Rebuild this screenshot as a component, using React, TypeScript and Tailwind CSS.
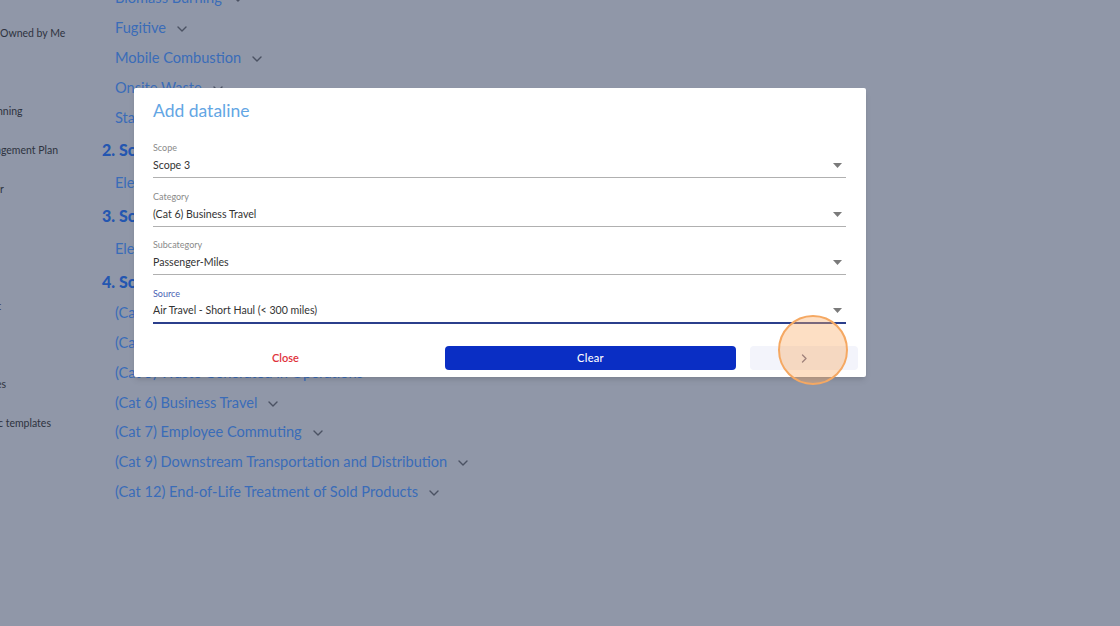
import React from "react";

const font = { fontFamily: "Lato, 'Open Sans', 'Liberation Sans', sans-serif" };

function Chevron() {
  return (
    <svg width="10" height="6" viewBox="0 0 10 6" className="ml-[11px] mt-[2px]" fill="none">
      <path d="M1 1l4 4 4-4" stroke="#4b5263" strokeWidth="1.4" strokeLinecap="round" strokeLinejoin="round" />
    </svg>
  );
}

function LinkRow({ text, h, chevron = true }: { text: string; h: string; chevron?: boolean }) {
  return (
    <div className={`flex items-center ${h} pl-[13px] text-[14.6px] text-[#3a6cb8] whitespace-nowrap`}>
      <span>{text}</span>
      {chevron && <Chevron />}
    </div>
  );
}

function Heading({ text }: { text: string }) {
  return (
    <div className="flex items-center h-[33px] text-[16px] font-black text-[#2456b0] whitespace-nowrap" style={{ fontFamily: "Lato, 'Noto Sans', sans-serif" }}>
      {text}
    </div>
  );
}

function Caret() {
  return (
    <svg width="9" height="5" viewBox="0 0 9 5">
      <path d="M0 0h9L4.5 5z" fill="#7a7a7a" />
    </svg>
  );
}

function Field({ label, value, active = false }: { label: string; value: string; active?: boolean }) {
  return (
    <div className="flex flex-col h-[48.5px] pt-[6px]">
      <div className={`text-[9px] leading-[12px] ${active ? "text-[#4a63b4]" : "text-[#8a8a8a]"}`}>{label}</div>
      <div
        className={`flex items-center justify-between h-[24px] ${
          active ? "border-b-2 border-[#2b3f8c]" : "border-b border-[#b0b0b0]"
        }`}
      >
        <span className="text-[10.6px] text-[#333] pt-[1px]">{value}</span>
        <span className="pr-[4px]">
          <Caret />
        </span>
      </div>
    </div>
  );
}

export default function App() {
  const sidebar: { text: string; ml: string; h: string }[] = [
    { text: "Shared with Me", ml: "ml-[-52px]", h: "h-[39px]" },
    { text: "Owned by Me", ml: "ml-0", h: "h-[39px]" },
    { text: "Reports", ml: "ml-[-40px]", h: "h-[39px]" },
    { text: "Planning", ml: "ml-[-17px]", h: "h-[39px]" },
    { text: "Management Plan", ml: "ml-[-25px]", h: "h-[39px]" },
    { text: "Calculator", ml: "ml-[-43px]", h: "h-[39px]" },
    { text: "Settings", ml: "ml-[-60px]", h: "h-[39px]" },
    { text: "Help", ml: "ml-[-60px]", h: "h-[39px]" },
    { text: "Import", ml: "ml-[-30px]", h: "h-[39px]" },
    { text: "Templates", ml: "ml-[-60px]", h: "h-[39px]" },
    { text: "Sources", ml: "ml-[-30px]", h: "h-[39px]" },
    { text: "Public templates", ml: "ml-[-25px]", h: "h-[39px]" },
  ];

  return (
    <div className="relative w-[1120px] h-[626px] overflow-hidden bg-[#9097a8]" style={font}>
      <div className="flex h-full">
        {/* sidebar */}
        <div className="w-[102px] shrink-0 overflow-hidden">
          <div className="flex flex-col mt-[-25px]">
            {sidebar.map((s, i) => (
              <div key={i} className={`flex items-center ${s.h} ${s.ml} text-[10.5px] text-[#2e3340] whitespace-nowrap`}>
                {s.text}
              </div>
            ))}
          </div>
        </div>
        {/* content */}
        <div className="flex flex-col mt-[-17px]">
          <LinkRow text="Biomass Burning" h="h-[30px]" />
          <LinkRow text="Fugitive" h="h-[30px]" />
          <LinkRow text="Mobile Combustion" h="h-[30px]" />
          <LinkRow text="Onsite Waste" h="h-[30px]" />
          <LinkRow text="Stationary Combustion" h="h-[30px]" />
          <Heading text="2. Scope 2 - Location Based" />
          <LinkRow text="Electricity" h="h-[33px]" />
          <Heading text="3. Scope 2 - Market Based" />
          <LinkRow text="Electricity" h="h-[33px]" />
          <Heading text="4. Scope 3" />
          <LinkRow text="(Cat 1) Purchased Goods and Services" h="h-[30px]" />
          <LinkRow text="(Cat 3) Fuel- and Energy-Related Activities" h="h-[30px]" />
          <LinkRow text="(Cat 5) Waste Generated in Operations" h="h-[29.7px]" />
          <LinkRow text="(Cat 6) Business Travel" h="h-[29.7px]" />
          <LinkRow text="(Cat 7) Employee Commuting" h="h-[29.7px]" />
          <LinkRow text="(Cat 9) Downstream Transportation and Distribution" h="h-[29.7px]" />
          <LinkRow text="(Cat 12) End-of-Life Treatment of Sold Products" h="h-[29.7px]" />
        </div>
      </div>

      {/* modal */}
      <div className="absolute left-[134px] top-[88px] w-[732px] h-[289px] bg-white rounded-[2px] shadow-md">
        <div className="flex flex-col h-full">
          <div className="px-[19px] pt-[12px] h-[48px] text-[17.5px] text-[#63a6e4] leading-[22px]">Add dataline</div>
          <div className="flex flex-col pl-[19px] pr-[20px]">
            <Field label="Scope" value="Scope 3" />
            <Field label="Category" value="(Cat 6) Business Travel" />
            <Field label="Subcategory" value="Passenger-Miles" />
            <Field label="Source" value="Air Travel - Short Haul (< 300 miles)" active />
          </div>
          <div className="flex items-center gap-[14px] pl-[6px] pt-[16px]">
            <button className="w-[291px] h-[24px] text-[11px] font-semibold text-[#e0313b]">Close</button>
            <button className="w-[291px] h-[24px] rounded-[4px] bg-[#0a2ec4] text-[11px] font-medium text-white tracking-[0.3px]">
              Clear
            </button>
            <button className="w-[108px] h-[24px] rounded-[4px] bg-[#f3f4fb] flex items-center justify-center">
              <svg width="7" height="9" viewBox="0 0 7 9" fill="none">
                <path d="M1.5 1l3.5 3.5L1.5 8" stroke="#6a6a8a" strokeWidth="1.4" strokeLinecap="round" strokeLinejoin="round" />
              </svg>
            </button>
          </div>
        </div>
      </div>

      {/* click highlight */}
      <div className="absolute left-[778px] top-[315px] w-[70px] h-[70px] rounded-full border-2 border-[#f5a862] bg-[rgba(251,170,100,0.38)]" />
    </div>
  );
}
